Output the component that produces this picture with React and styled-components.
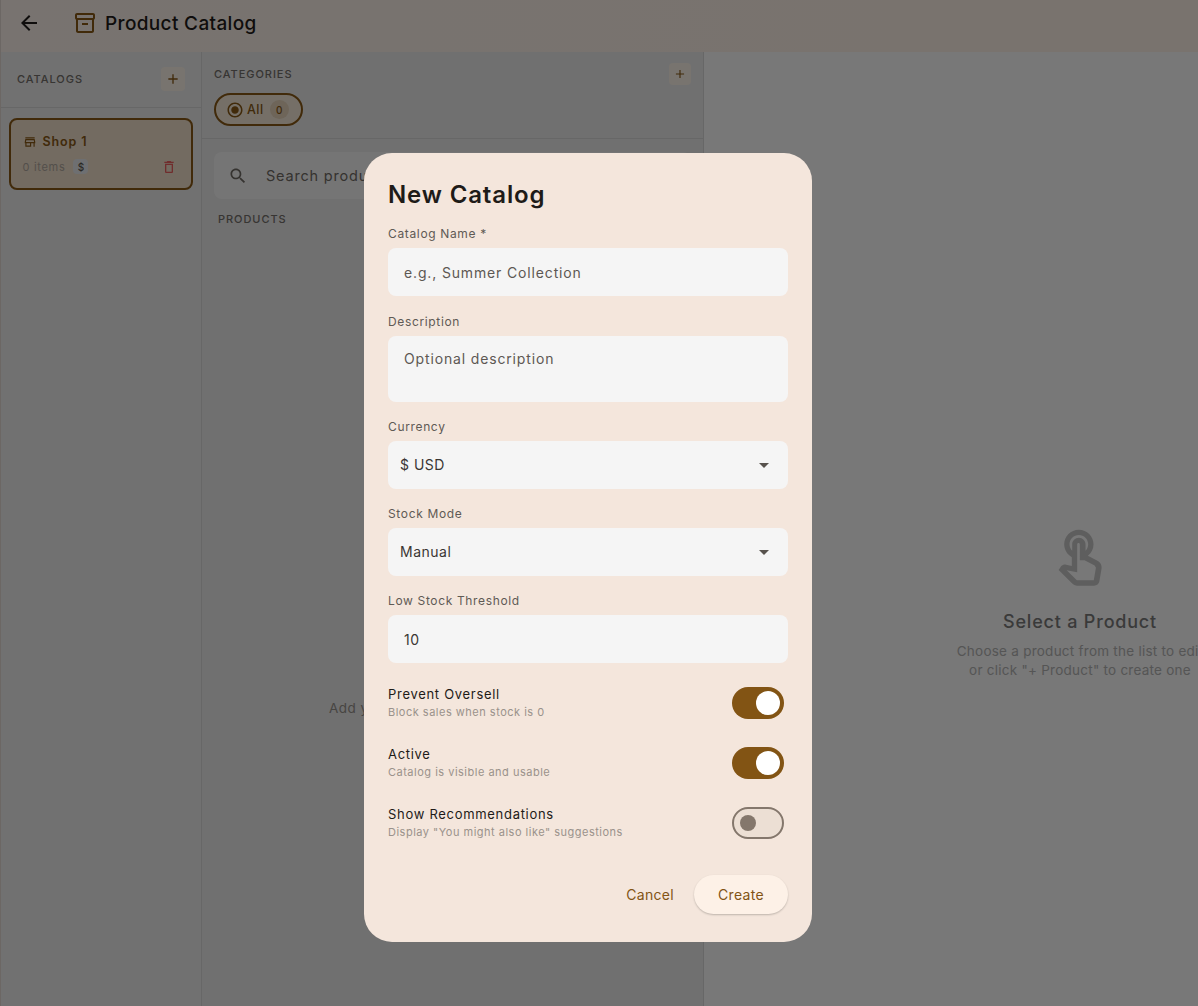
import React from 'react';
import styled, { createGlobalStyle } from 'styled-components';

const FONT = `Inter, "Noto Sans", sans-serif`;

const GlobalStyle = createGlobalStyle`
  html, body { margin: 0; padding: 0; height: 100%; overflow: hidden; }
  body { font-family: ${FONT}; background: #f0f0f0; }
  * { box-sizing: border-box; }
`;

const Page = styled.div`
  width: 1198px;
  height: 1006px;
  overflow: hidden;
  display: flex;
  flex-direction: column;
  border-left: 1px solid #d9cfc8;
`;

const TopBar = styled.header`
  height: 52px;
  flex: none;
  display: flex;
  align-items: center;
  padding: 0 0 6px 16px;
  background: linear-gradient(90deg, #f0e7e0, #f3e7dc);
`;

const BackButton = styled.button`
  width: 24px;
  height: 24px;
  padding: 0;
  border: 0;
  background: none;
  color: #1e1b18;
  display: flex;
  margin-right: 32px;
`;

const BrandIcon = styled.span`
  display: flex;
  color: #825414;
`;

const PageTitle = styled.h1`
  margin: 0 0 0 8px;
  font-size: 19px;
  font-weight: 500;
  letter-spacing: 0.35px;
  color: #1e1b18;
`;

const Body = styled.div`
  flex: 1;
  display: flex;
  min-height: 0;
`;

const CatalogPane = styled.aside`
  flex: 0 0 201px;
  border-right: 1px solid #cfcfcf;
  background: #e2e2e2;
`;

const PaneHead = styled.div`
  height: 56px;
  padding: 0 16px 2px;
  display: flex;
  align-items: center;
  justify-content: space-between;
  border-bottom: 1px solid #cfcfcf;
`;

const SectionLabel = styled.div`
  font-size: 11px;
  font-weight: 500;
  letter-spacing: 0.95px;
  color: #6e6a66;
`;

const SquareAdd = styled.button`
  width: ${p => p.$size}px;
  height: ${p => p.$size}px;
  padding: 0;
  border: 0;
  border-radius: 4px;
  background: #f1e9df;
  color: #825414;
  display: flex;
  align-items: center;
  justify-content: center;
`;

const CatalogCard = styled.div`
  margin: 10px 8px;
  height: 72px;
  border: 2px solid #825414;
  border-radius: 8px;
  background: #e6d6c2;
  padding: 11.5px 11.5px 0 11.5px;
`;

const CardTitle = styled.div`
  display: flex;
  align-items: center;
  gap: 6px;
  font-size: 12.5px;
  font-weight: 600;
  letter-spacing: 0.9px;
  color: #825414;
  height: 20px;
`;

const CardMeta = styled.div`
  display: flex;
  align-items: center;
  margin-top: 7px;
  height: 16px;
  font-size: 11px;
  color: #a79f97;
  letter-spacing: 0.7px;
`;

const CurrencyTag = styled.span`
  width: 15px;
  height: 15px;
  margin-left: 8px;
  margin-right: auto;
  border-radius: 4px;
  background: #dcdfe2;
  color: #554f4a;
  font-size: 10px;
  font-weight: 500;
  letter-spacing: 0;
  display: flex;
  align-items: center;
  justify-content: center;
`;

const TrashIcon = styled.span`
  display: flex;
  color: #e05a5a;
  margin-right: 3px;
`;

const ProductPane = styled.section`
  flex: 0 0 502px;
  display: flex;
  flex-direction: column;
  border-right: 1px solid #cfcfcf;
  background: #e0e0e0;
`;

const CategoryHead = styled.div`
  height: 87px;
  flex: none;
  padding: 11px 12px 0 12px;
  border-bottom: 1px solid #cfcfcf;
`;

const CategoryTop = styled.div`
  display: flex;
  align-items: center;
  justify-content: space-between;
`;

const Chip = styled.div`
  width: 89px;
  height: 33px;
  margin-top: 8px;
  border: 2px solid #825414;
  border-radius: 17px;
  background: #eadfce;
  color: #825414;
  font-size: 12.5px;
  font-weight: 500;
  letter-spacing: 0.5px;
  display: flex;
  align-items: center;
  padding-left: 10px;
  gap: 3px;
`;

const ChipCount = styled.span`
  width: 19px;
  height: 19px;
  border-radius: 50%;
  background: #dccab2;
  font-size: 10px;
  letter-spacing: 0;
  display: flex;
  align-items: center;
  justify-content: center;
  margin-left: 3px;
`;

const SearchBox = styled.div`
  margin: 13px 12px 0 12px;
  height: 47px;
  border-radius: 8px;
  background: #ebebeb;
  display: flex;
  align-items: center;
  padding-left: 14px;
  gap: 18px;
  font-size: 14.5px;
  letter-spacing: 0.8px;
  color: #6b6661;
`;

const ProductsLabel = styled(SectionLabel)`
  margin: 13px 0 0 16px;
`;

const EmptyProducts = styled.div`
  flex: 1;
  display: flex;
  flex-direction: column;
  align-items: center;
  padding-top: 474px;
  font-size: 13.5px;
  letter-spacing: 0.47px;
  color: #8f8a85;
`;

const DetailPane = styled.section`
  flex: 0 0 752px;
  display: flex;
  flex-direction: column;
  align-items: center;
  padding-top: 475px;
  background: #f0f0f0;
`;

const TouchIcon = styled.div`
  display: flex;
  color: #bcbcbc;
`;

const DetailTitle = styled.div`
  margin-top: 20px;
  font-size: 18px;
  font-weight: 500;
  letter-spacing: 0.8px;
  color: #757575;
`;

const DetailText = styled.div`
  margin-top: 10px;
  font-size: 13.5px;
  line-height: 19px;
  letter-spacing: 0.25px;
  text-align: center;
  color: #ababab;
`;

const Scrim = styled.div`
  position: fixed;
  inset: 0;
  background: rgba(0, 0, 0, 0.5);
  padding: 153px 0 0 364px;
`;

const Dialog = styled.div`
  width: 448px;
  height: 789px;
  padding: 24px;
  border-radius: 28px;
  background: #f4e6dc;
`;

const DialogTitle = styled.h2`
  margin: 0 0 14.4px;
  height: 35px;
  line-height: 35px;
  font-size: 24px;
  font-weight: 600;
  letter-spacing: 0.85px;
  color: #1e1b18;
`;

const Field = styled.div`
  margin-bottom: 17.2px;
`;

const FieldLabel = styled.label`
  display: block;
  height: 16px;
  margin-bottom: 6px;
  line-height: 16px;
  font-size: 12px;
  font-weight: 400;
  letter-spacing: 0.65px;
  color: #5f5a55;
`;

const InputBox = styled.div`
  height: ${p => p.$height || 48}px;
  padding: ${p => (p.$multi ? '14px 16px 0' : `0 16px 0 ${p.$inset || 16}px`)};
  border-radius: 8px;
  background: #f5f5f5;
  display: flex;
  align-items: ${p => (p.$multi ? 'flex-start' : 'center')};
  justify-content: space-between;
  font-size: 14px;
  letter-spacing: ${p => (p.$value ? '0.5px' : '0.85px')};
  color: ${p => (p.$value ? '#3a3633' : '#5d5853')};
`;

const CaretIcon = styled.span`
  display: flex;
  color: #57524d;
  margin-right: -4px;
`;

const ToggleRows = styled.div`
  margin-top: 24px;
  display: flex;
  flex-direction: column;
  gap: 28px;
`;

const ToggleRow = styled.div`
  height: 32px;
  display: flex;
  align-items: center;
  justify-content: space-between;
  padding-right: 4px;
`;

const ToggleName = styled.div`
  font-size: 13px;
  font-weight: 400;
  letter-spacing: 0.7px;
  color: #1e1b18;
  line-height: 16px;
`;

const ToggleHint = styled.div`
  margin-top: 3px;
  font-size: 11px;
  letter-spacing: 0.5px;
  color: #9a928b;
  line-height: 15px;
`;

const Switch = styled.div`
  width: 52px;
  height: 32px;
  border-radius: 16px;
  display: flex;
  align-items: center;
  background: ${p => (p.$on ? '#825414' : '#ecdfd4')};
  border: ${p => (p.$on ? '0' : '2px solid #84776c')};
  justify-content: ${p => (p.$on ? 'flex-end' : 'flex-start')};
  padding: ${p => (p.$on ? '0 4px' : '0 6px')};
`;

const Knob = styled.span`
  width: ${p => (p.$on ? 24 : 16)}px;
  height: ${p => (p.$on ? 24 : 16)}px;
  border-radius: 50%;
  background: ${p => (p.$on ? '#ffffff' : '#84776c')};
`;

const DialogActions = styled.div`
  margin-top: 36px;
  display: flex;
  justify-content: flex-end;
  align-items: center;
  gap: 20px;
`;

const TextButton = styled.button`
  padding: 0;
  border: 0;
  background: none;
  font-family: ${FONT};
  font-size: 14px;
  letter-spacing: 0.3px;
  color: #825414;
`;

const RaisedButton = styled(TextButton)`
  width: 94px;
  height: 39px;
  border-radius: 20px;
  background: #fdf1e7;
  box-shadow: 0 1px 2px rgba(0, 0, 0, 0.22);
`;

const Icon = ({ d, size = 24 }) => (
  <svg width={size} height={size} viewBox="0 0 24 24" fill="currentColor">
    <path d={d} />
  </svg>
);

const paths = {
  back: 'M20 11H7.83l5.59-5.59L12 4l-8 8 8 8 1.41-1.41L7.83 13H20v-2z',
  archive: 'M20 2H4c-1 0-2 .9-2 2v3.01c0 .72.43 1.34 1 1.69V20c0 1.1 1.1 2 2 2h14c.9 0 2-.9 2-2V8.7c.57-.35 1-.97 1-1.69V4c0-1.1-1-2-2-2zm-1 18H5V9h14v11zm1-13H4V4h16v3zM9 12h6v2H9z',
  add: 'M19 13h-6v6h-2v-6H5v-2h6V5h2v6h6v2z',
  search: 'M15.5 14h-.79l-.28-.27C15.41 12.59 16 11.11 16 9.5 16 5.91 13.09 3 9.5 3S3 5.91 3 9.5 5.91 16 9.5 16c1.61 0 3.09-.59 4.23-1.57l.27.28v.79l5 4.99L20.49 19l-4.99-5zm-6 0C7.01 14 5 11.99 5 9.5S7.01 5 9.5 5 14 7.01 14 9.5 11.99 14 9.5 14z',
  store: 'M18.36 9l.6 3H5.04l.6-3h12.72M20 4H4v2h16V4zm0 3H4l-1 5v2h1v6h10v-6h4v6h2v-6h1v-2l-1-5zM6 18v-4h6v4H6z',
  trash: 'M6 19c0 1.1.9 2 2 2h8c1.1 0 2-.9 2-2V7H6v12zM8 9h8v10H8V9zm7.5-5l-1-1h-5l-1 1H5v2h14V4z',
  radio: 'M12 7c-2.76 0-5 2.24-5 5s2.24 5 5 5 5-2.24 5-5-2.24-5-5-5zm0-5C6.48 2 2 6.48 2 12s4.48 10 10 10 10-4.48 10-10S17.52 2 12 2zm0 18c-4.42 0-8-3.58-8-8s3.58-8 8-8 8 3.58 8 8-3.58 8-8 8z',
  caret: 'M7 10l5 5 5-5z',
  touch: 'M18.19 12.44l-3.24-1.62c1.29-1 2.12-2.56 2.12-4.32C17.07 3.47 14.6 1 11.57 1S6.07 3.47 6.07 6.5c0 2.08 1.16 3.88 2.86 4.82v3.26l-2.15-.45c-.14-.03-.26-.05-.4-.05-.53 0-1.03.21-1.41.59L4 16.08l5.09 5.09C9.52 21.6 10.2 22 11 22h6.3c.98 0 1.81-.7 1.97-1.67l.8-4.71c.22-1.3-.43-2.58-1.88-3.18zM8.07 6.5c0-1.93 1.57-3.5 3.5-3.5s3.5 1.57 3.5 3.5c0 .95-.38 1.81-1 2.44V6.5c0-1.38-1.12-2.5-2.5-2.5s-2.5 1.12-2.5 2.5v2.44c-.62-.63-1-1.49-1-2.44zm9.9 8.79l-.8 4.71H11c-.1 0-.2-.05-.3-.15l-3.68-3.67 3.92.82V6.5c0-.28.22-.5.5-.5s.5.22.5.5v6h1.76l3.46 1.73c.45.22.75.87.81 1.06z',
};

const toggles = [
  { name: 'Prevent Oversell', hint: 'Block sales when stock is 0', on: true },
  { name: 'Active', hint: 'Catalog is visible and usable', on: true },
  { name: 'Show Recommendations', hint: 'Display "You might also like" suggestions', on: false },
];

export default function App() {
  return (
    <>
      <GlobalStyle />
      <Page>
        <TopBar>
          <BackButton><Icon d={paths.back} /></BackButton>
          <BrandIcon><Icon d={paths.archive} /></BrandIcon>
          <PageTitle>Product Catalog</PageTitle>
        </TopBar>
        <Body>
          <CatalogPane>
            <PaneHead>
              <SectionLabel>CATALOGS</SectionLabel>
              <SquareAdd $size={24}><Icon d={paths.add} size={16} /></SquareAdd>
            </PaneHead>
            <CatalogCard>
              <CardTitle><Icon d={paths.store} size={14} />Shop 1</CardTitle>
              <CardMeta>
                0 items
                <CurrencyTag>$</CurrencyTag>
                <TrashIcon><Icon d={paths.trash} size={16} /></TrashIcon>
              </CardMeta>
            </CatalogCard>
          </CatalogPane>
          <ProductPane>
            <CategoryHead>
              <CategoryTop>
                <SectionLabel>CATEGORIES</SectionLabel>
                <SquareAdd $size={22}><Icon d={paths.add} size={14} /></SquareAdd>
              </CategoryTop>
              <Chip>
                <Icon d={paths.radio} size={18} />
                All
                <ChipCount>0</ChipCount>
              </Chip>
            </CategoryHead>
            <SearchBox>
              <Icon d={paths.search} size={20} />
              Search products...
            </SearchBox>
            <ProductsLabel>PRODUCTS</ProductsLabel>
            <EmptyProducts>Add your first product to get started</EmptyProducts>
          </ProductPane>
          <DetailPane>
            <TouchIcon><Icon d={paths.touch} size={64} /></TouchIcon>
            <DetailTitle>Select a Product</DetailTitle>
            <DetailText>
              Choose a product from the list to edit
              <br />
              or click "+ Product" to create one
            </DetailText>
          </DetailPane>
        </Body>
      </Page>
      <Scrim>
        <Dialog>
          <DialogTitle>New Catalog</DialogTitle>
          <Field>
            <FieldLabel>Catalog Name *</FieldLabel>
            <InputBox>e.g., Summer Collection</InputBox>
          </Field>
          <Field>
            <FieldLabel>Description</FieldLabel>
            <InputBox $multi $height={66}>Optional description</InputBox>
          </Field>
          <Field>
            <FieldLabel>Currency</FieldLabel>
            <InputBox $value $inset={12}>
              $ USD
              <CaretIcon><Icon d={paths.caret} /></CaretIcon>
            </InputBox>
          </Field>
          <Field>
            <FieldLabel>Stock Mode</FieldLabel>
            <InputBox $value $inset={12}>
              Manual
              <CaretIcon><Icon d={paths.caret} /></CaretIcon>
            </InputBox>
          </Field>
          <Field>
            <FieldLabel>Low Stock Threshold</FieldLabel>
            <InputBox $value>10</InputBox>
          </Field>
          <ToggleRows>
            {toggles.map(t => (
              <ToggleRow key={t.name}>
                <div>
                  <ToggleName>{t.name}</ToggleName>
                  <ToggleHint>{t.hint}</ToggleHint>
                </div>
                <Switch $on={t.on}><Knob $on={t.on} /></Switch>
              </ToggleRow>
            ))}
          </ToggleRows>
          <DialogActions>
            <TextButton>Cancel</TextButton>
            <RaisedButton>Create</RaisedButton>
          </DialogActions>
        </Dialog>
      </Scrim>
    </>
  );
}
